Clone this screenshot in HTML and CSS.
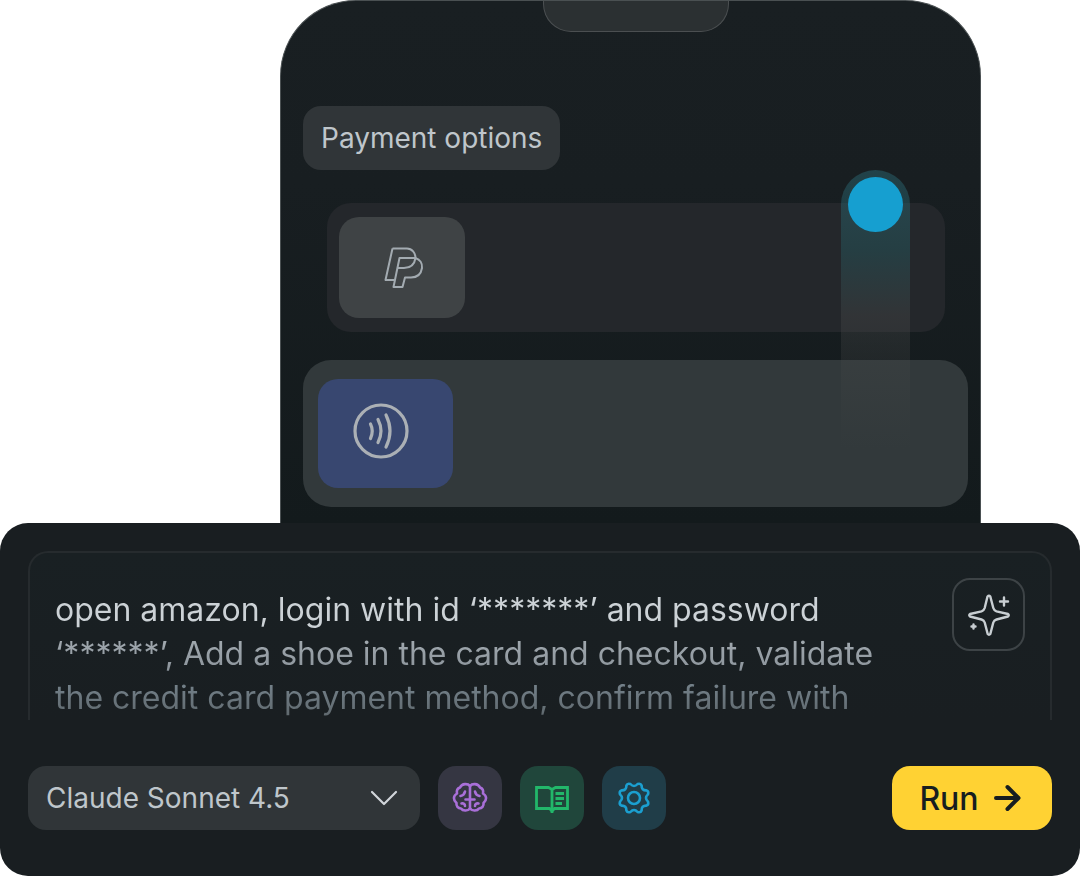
FILE: index.html
```html
<!DOCTYPE html>
<html lang="en">
<head>
    <meta charset="UTF-8">
    <meta name="viewport" content="width=device-width, initial-scale=1.0">
    <title>Payment test</title>
    <link rel="stylesheet" href="styles.css">
</head>
<body>
    <main class="scene">
        <!-- Phone -->
        <section class="phone">
            <div class="notch"></div>
            <h1 class="chip">Payment options</h1>

            <button type="button" class="option option-paypal" aria-label="PayPal">
                <span class="option-logo">
                    <svg width="40" height="42" viewBox="0 0 40 42" fill="none" stroke="#a3abb1" stroke-width="2" stroke-linejoin="round">
                        <path d="M8.500 1.500H23C28 1.500 31.500 6 31.500 11C30.500 17.500 26 21 20 21H13.500M8.500 1.500L1.500 33H10.500"/>
                        <path d="M31.500 11C36 12.500 38.500 16.500 38 21C37 27.500 32.500 30.500 27 30.500H21L18.500 40H9.500L15.500 11H31.500"/>
                    </svg>
                </span>
            </button>

            <button type="button" class="option option-tap" aria-label="Contactless">
                <span class="option-logo">
                    <svg width="56" height="56" viewBox="0 0 56 56" fill="none" stroke="#abb0b5" stroke-width="3.200" stroke-linecap="round">
                        <circle cx="28" cy="28" r="26"/>
                        <path d="M17.500 21Q21 28 17.500 35.500"/>
                        <path d="M25 16.500Q31 28 25 39.500"/>
                        <path d="M33 12Q41 28 33 44"/>
                    </svg>
                </span>
            </button>

            <div class="touch-trail"><span class="touch-dot"></span></div>
        </section>

        <!-- Prompt panel -->
        <form class="panel">
            <div class="prompt">
                <textarea class="prompt-text" rows="3" aria-label="Prompt">open amazon, login with id ‘*******’ and password ‘******’, Add a shoe in the card and checkout, validate the credit card payment method, confirm failure with</textarea>
                <button type="button" class="sparkle" aria-label="Improve prompt">
                    <svg width="44" height="44" viewBox="0 0 44 44" fill="none" stroke="#c8ced2" stroke-width="2.400" stroke-linecap="round" stroke-linejoin="round">
                        <path d="M20.500 3.500Q22 2 23.300 3.500L26.300 15Q27 17.500 29.500 18.300L41 21Q42.500 22 41 23.500L29.500 26.500Q27 27.300 26.300 29.500L23.300 41Q22 42.500 20.700 41L17.700 29.500Q17 27.300 14.500 26.500L3 23.500Q1.500 22 3 21L14.500 18.300Q17 17.500 17.700 15Z"/>
                        <path d="M37 4.500V12.500M33 8.500H41M6.500 31.500V35.500M4.500 33.500H8.500"/>
                    </svg>
                </button>
            </div>

            <div class="toolbar">
                <div class="model">
                    <select class="model-select" aria-label="Model">
                        <option>Claude Sonnet 4.5</option>
                    </select>
                    <svg class="model-arrow" width="28" height="16" viewBox="0 0 28 16" fill="none" stroke="#d0d5d9" stroke-width="2.200" stroke-linecap="round" stroke-linejoin="round">
                        <path d="M2 2L14 14L26 2"/>
                    </svg>
                </div>

                <button type="button" class="tool tool-memory" aria-label="Memory">
                    <svg width="36" height="36" viewBox="0 0 36 36" fill="none" stroke="#a96fd8" stroke-width="2.600" stroke-linecap="round" stroke-linejoin="round">
                        <path d="M18 6V29"/>
                        <path d="M18 6C16 3.500 10 3 8 7.500C5 8.500 4.500 11 5 13.500C1 16 1 20 4.500 23C4 26 6 28.500 9 28.500C11 31.500 16 31 18 28.500"/>
                        <path d="M18 6C20 3.500 26 3 28 7.500C31 8.500 31.500 11 31 13.500C35 16 35 20 31.500 23C32 26 30 28.500 27 28.500C25 31.500 20 31 18 28.500"/>
                        <path d="M13 11.500C12.500 14 11 15.500 8.500 16M23 11.500C23.500 14 25 15.500 27.500 16"/>
                        <path d="M18 19.500H13.500M18 19.500H22.500M9.500 23.500C11.500 23 13 24 13 26M26.500 23.500C24.500 23 23 24 23 26"/>
                    </svg>
                </button>
                <button type="button" class="tool tool-docs" aria-label="Knowledge">
                    <svg width="36" height="36" viewBox="0 0 36 36" fill="none" stroke="#22b76a" stroke-width="2.800">
                        <path d="M2.500 7.500H14.500L18 9.500L21.500 7.500H33.500V28.500H20.500L18 31L15.500 28.500H2.500Z"/>
                        <path d="M18 9V33M21.500 13.500H30M21.500 18.500H30M21.500 23.500H28"/>
                    </svg>
                </button>
                <button type="button" class="tool tool-settings" aria-label="Settings">
                    <svg width="36" height="36" viewBox="0 0 36 36" fill="none" stroke="#1b9fd0" stroke-width="2.600" stroke-linejoin="round">
                        <circle cx="18" cy="18" r="6"/>
                        <path d="M32 14.400Q28 18 32 21.600Q33 24.700 30.500 25.600Q25.400 25.400 25.600 30.500Q24.700 33 21.600 32Q18 28 14.400 32Q11.300 33 10.400 30.500Q10.600 25.400 5.500 25.600Q3 24.700 4 21.600Q8 18 4 14.400Q3 11.300 5.500 10.400Q10.600 10.600 10.400 5.500Q11.300 3 14.400 4Q18 8 21.600 4Q24.700 3 25.600 5.500Q25.400 10.600 30.500 10.400Q33 11.300 32 14.400Z"/>
                    </svg>
                </button>

                <button type="submit" class="run">
                    Run
                    <svg width="28" height="28" viewBox="0 0 28 28" fill="none" stroke="#171d20" stroke-width="4" stroke-linecap="round" stroke-linejoin="round">
                        <path d="M3 14H25M14.500 3L25.500 14L14.500 25"/>
                    </svg>
                </button>
            </div>
        </form>
    </main>
</body>
</html>
```
FILE: styles.css
```css
* {
    box-sizing: border-box;
}
body {
    margin: 0;
    background: #fff;
    font-family: Inter, "Liberation Sans", sans-serif;
    color: #bfc6cb;
}
button, select, textarea {
    font-family: inherit;
    color: inherit;
    margin: 0;
    padding: 0;
    border: none;
    background: none;
}
button {
    cursor: pointer;
}
svg {
    display: block;
}

/* Phone */
.phone {
    position: relative;
    display: flex;
    flex-direction: column;
    margin: 0 99px 0 280px;
    padding: 0 12px 16px 22px;
    border: 1px solid #4a5052;
    border-bottom: none;
    border-radius: 76px 76px 0 0;
    background: linear-gradient(#191f22, #181e21 35%, #131a1c);
}
.notch {
    align-self: center;
    width: 186px;
    height: 31px;
    border: 1px solid #4b4f51;
    border-top: none;
    border-radius: 0 0 28px 28px;
    background: #2b3032;
}
.chip {
    align-self: flex-start;
    margin: 74px 0 33px;
    padding: 0 18px;
    border-radius: 18px;
    background: #303538;
    font-size: 28px;
    font-weight: 400;
    line-height: 64px;
}
.option {
    display: flex;
    align-items: center;
}
.option-logo {
    display: flex;
    align-items: center;
    justify-content: center;
    border-radius: 20px;
}
.option-paypal {
    margin: 0 23px 28px 24px;
    padding: 14px 12px;
    border-radius: 24px;
    background: #24272b;
}
.option-paypal .option-logo {
    width: 126px;
    height: 101px;
    padding-left: 4px;
    background: #3f4345;
}
.option-tap {
    padding: 19px 15px;
    border-radius: 28px;
    background: #32393b;
}
.option-tap .option-logo {
    width: 135px;
    height: 109px;
    padding: 0 10px 6px 0;
    background: #384770;
}

/* Finger swipe drawn over the options */
.touch-trail {
    position: absolute;
    top: 169px;
    right: 70px;
    width: 69px;
    height: 280px;
    padding: 7px;
    border-radius: 35px 35px 0 0;
    background: linear-gradient(rgba(46, 116, 130, 0.42), rgba(38, 91, 97, 0.45) 28%, rgba(74, 76, 76, 0.35) 52%, rgba(70, 68, 66, 0));
}
.touch-dot {
    display: block;
    width: 55px;
    height: 55px;
    border-radius: 50%;
    background: #169fd0;
}

/* Prompt panel */
.panel {
    position: relative;
    padding: 28px 28px 46px;
    border-radius: 28px;
    background: #191e21;
}
.prompt {
    display: flex;
    align-items: flex-start;
    gap: 36px;
    margin-bottom: 46px;
    padding: 0 25px;
    border: 2px solid #262b2e;
    border-bottom: none;
    border-radius: 20px 20px 0 0;
    background: linear-gradient(#192023, #191e21);
}
.prompt-text {
    flex: 1;
    min-width: 0;
    height: 167px;
    padding-top: 35px;
    overflow: hidden;
    resize: none;
    font-size: 32px;
    font-weight: 400;
    line-height: 44px;
    color: transparent;
    background: linear-gradient(#ccd2d6 44%, #a3abb1 50%, #8f979e 68%, #74818a 78%, #5d666b);
    -webkit-background-clip: text;
    background-clip: text;
}
.sparkle {
    display: flex;
    align-items: center;
    justify-content: center;
    width: 73px;
    height: 73px;
    margin-top: 25px;
    border: 2px solid #3d4346;
    border-radius: 18px;
}
.toolbar {
    display: flex;
    gap: 18px;
}
.model {
    display: grid;
    align-items: center;
    width: 392px;
    height: 64px;
    border-radius: 18px;
    background: #303538;
}
.model-select {
    grid-area: 1 / 1;
    width: 100%;
    height: 64px;
    padding: 0 64px 0 18px;
    appearance: none;
    font-size: 28px;
    font-weight: 400;
}
.model-arrow {
    grid-area: 1 / 1;
    justify-self: end;
    margin-right: 22px;
    pointer-events: none;
}
.tool {
    display: flex;
    align-items: center;
    justify-content: center;
    width: 64px;
    height: 64px;
    border-radius: 18px;
}
.tool-memory {
    background: #353642;
}
.tool-docs {
    background: #20463b;
}
.tool-settings {
    background: #203d48;
}
.run {
    display: flex;
    align-items: center;
    justify-content: center;
    gap: 14px;
    width: 160px;
    height: 64px;
    margin-left: auto;
    padding-right: 4px;
    border-radius: 18px;
    background: #ffd233;
    color: #171d20;
    font-size: 32px;
    font-weight: 500;
}
```
